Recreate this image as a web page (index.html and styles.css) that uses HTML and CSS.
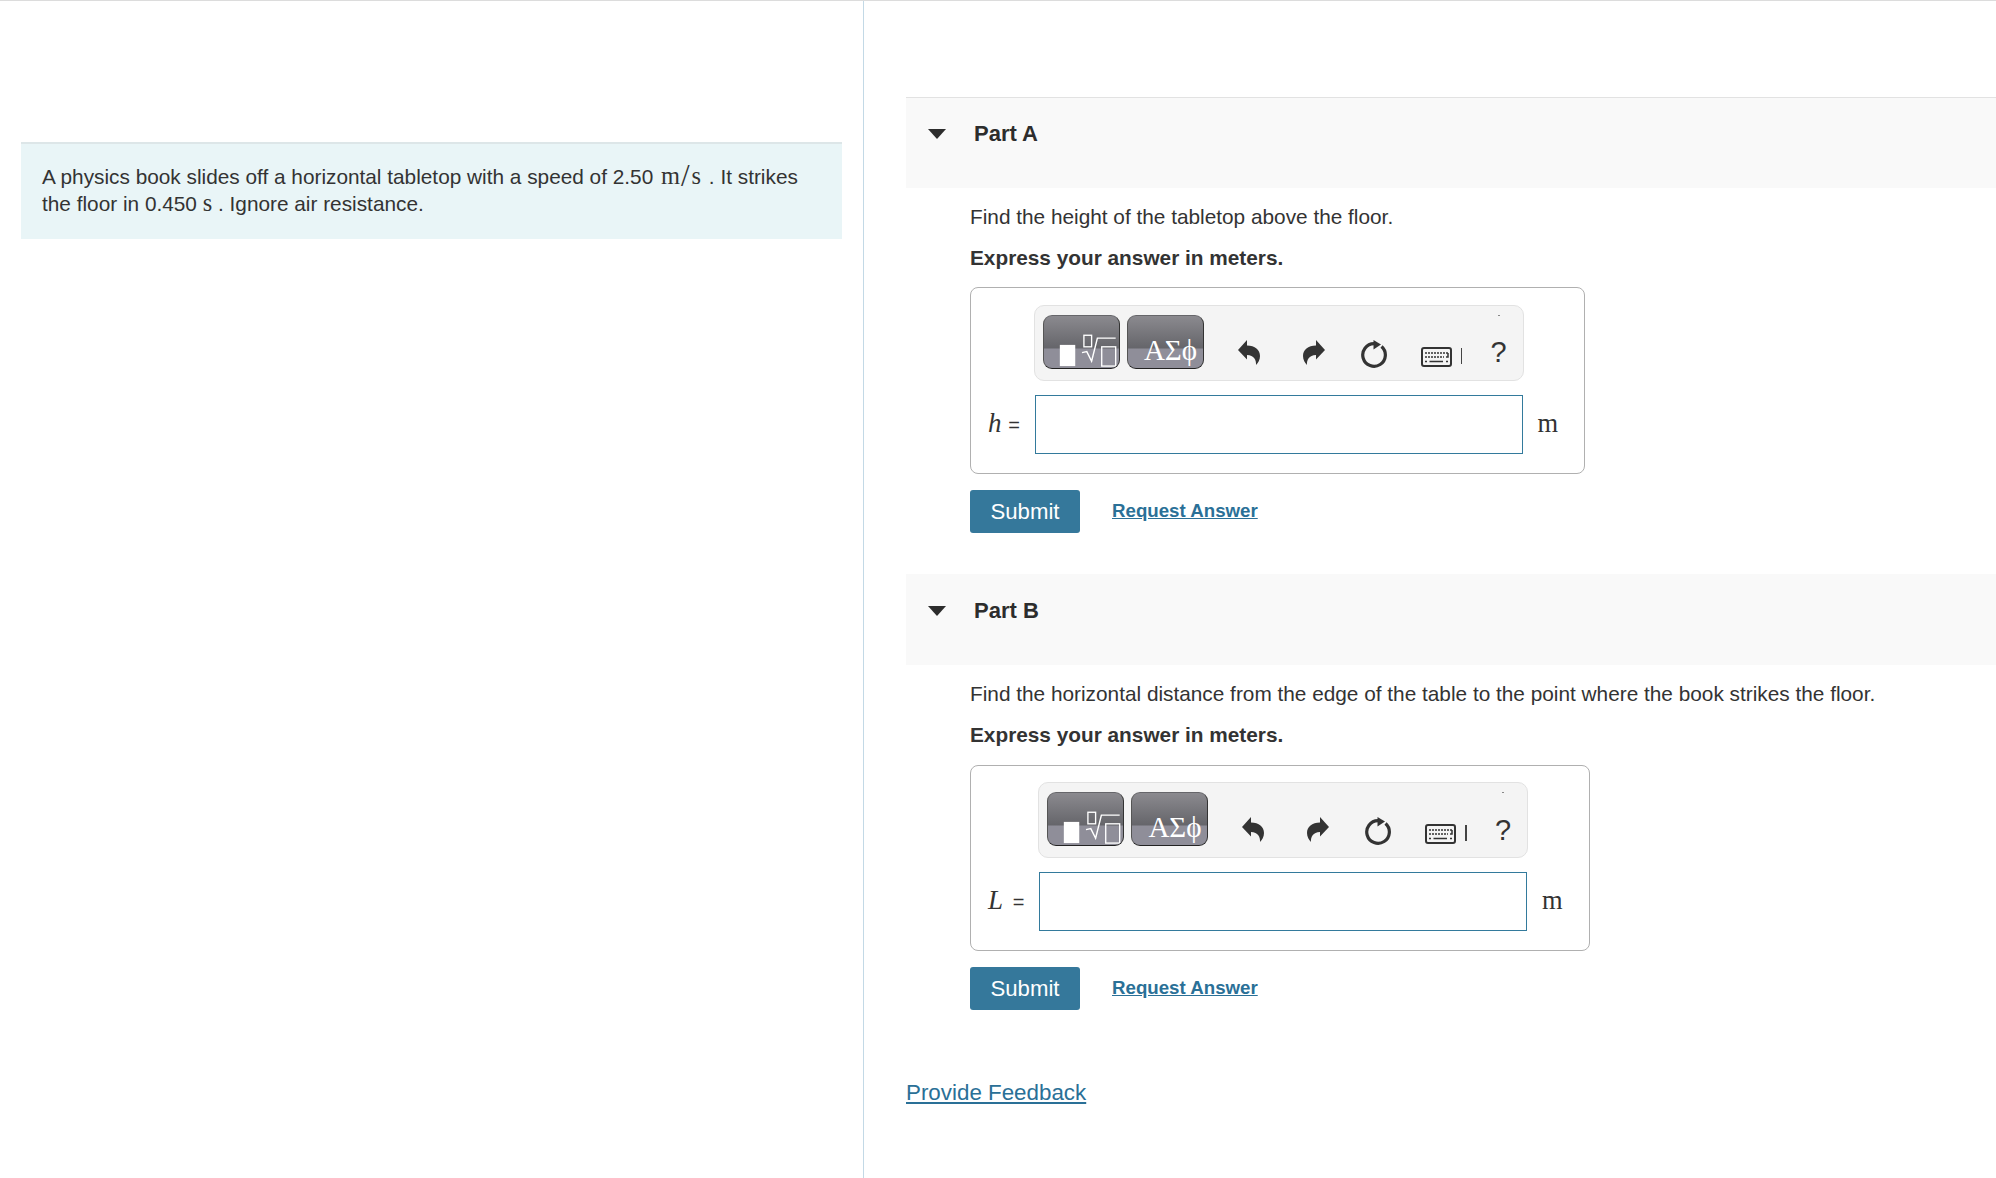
FILE: index.html
```html
<!DOCTYPE html>
<html lang="en">
<head>
<meta charset="utf-8">
<title>Physics problem</title>
<link rel="stylesheet" href="styles.css">
</head>
<body>
<svg class="defs" width="0" height="0" aria-hidden="true">
  <defs>
    <symbol id="i-undo" viewBox="0 0 22 25">
      <path d="M0 10 L9 0 V5.500 C17 5.500 22 10 22 16 C22 20 20 23 18 25 C18.500 20 16 15.500 9 15 V19.500 Z" fill="#333"/>
    </symbol>
    <symbol id="i-redo" viewBox="0 0 22 25">
      <path d="M22 10 L13 0 V5.500 C5 5.500 0 10 0 16 C0 20 2 23 4 25 C3.500 20 6 15.500 13 15 V19.500 Z" fill="#333"/>
    </symbol>
    <symbol id="i-reload" viewBox="0 0 27 28">
      <path d="M13 3.700 A11.300 11.300 0 1 0 20.500 6.500" fill="none" stroke="#333" stroke-width="3.200"/>
      <path d="M12.500 0 L20 4.500 L12.500 9.500 Z" fill="#333"/>
    </symbol>
    <symbol id="i-keys" viewBox="0 0 31 20">
      <rect x="1" y="1" width="29" height="18" rx="2" fill="#f4f4f4" stroke="#333" stroke-width="2"/>
      <path d="M4 6 H27 M4 10 H23" fill="none" stroke="#333" stroke-width="1.500" stroke-dasharray="2 1"/>
      <path d="M25 10 H27 V6 M4 14.500 H6 M8.500 14.500 H22 M25 14.500 H27" fill="none" stroke="#333" stroke-width="1.500"/>
    </symbol>
    <symbol id="i-tmpl" viewBox="0 0 77 54">
      <rect x="16" y="30" width="16" height="22" fill="#fff"/>
      <rect x="41" y="20" width="8" height="12" fill="none" stroke="#fff" stroke-width="1.400"/>
      <path d="M39 38 L44 37 L49 47 L55 23 H74" fill="none" stroke="#fff" stroke-width="1.500"/>
      <rect x="59.500" y="32" width="14.500" height="20" fill="none" stroke="#fff" stroke-width="1.400"/>
    </symbol>
  </defs>
</svg>
<div class="page">
  <aside class="left">
    <div class="intro">A physics book slides off a horizontal tabletop with a speed of 2.50 <span class="math math-spaced">m<span class="slash">/</span>s</span> . It strikes the floor in 0.450 <span class="math">s</span> . Ignore air resistance.</div>
  </aside>
  <main class="right">
    <section class="part">
      <h2 class="part-head"><span class="caret"></span>Part A</h2>
      <div class="part-body">
        <p class="q">Find the height of the tabletop above the floor.</p>
        <p class="q strong">Express your answer in meters.</p>
        <div class="answer">
          <div class="toolbar">
            <span class="tbtn"><svg class="tmpl"><use href="#i-tmpl"/></svg></span>
            <span class="tbtn sym">ΑΣϕ</span>
            <svg class="ic ic-undo"><use href="#i-undo"/></svg>
            <svg class="ic ic-redo"><use href="#i-redo"/></svg>
            <svg class="ic ic-reload"><use href="#i-reload"/></svg>
            <svg class="ic ic-keys"><use href="#i-keys"/></svg>
            <span class="kbar"></span>
            <span class="help">?</span>
          </div>
          <span class="label"><i class="var">h</i> <span class="eq">=</span></span>
          <input class="field" type="text" aria-label="h">
          <span class="unit">m</span>
        </div>
        <div class="actions">
          <button class="submit" type="button">Submit</button>
          <a class="req" href="#">Request Answer</a>
        </div>
      </div>
    </section>
    <section class="part part-b">
      <h2 class="part-head"><span class="caret"></span>Part B</h2>
      <div class="part-body">
        <p class="q">Find the horizontal distance from the edge of the table to the point where the book strikes the floor.</p>
        <p class="q strong">Express your answer in meters.</p>
        <div class="answer">
          <div class="toolbar">
            <span class="tbtn"><svg class="tmpl"><use href="#i-tmpl"/></svg></span>
            <span class="tbtn sym">ΑΣϕ</span>
            <svg class="ic ic-undo"><use href="#i-undo"/></svg>
            <svg class="ic ic-redo"><use href="#i-redo"/></svg>
            <svg class="ic ic-reload"><use href="#i-reload"/></svg>
            <svg class="ic ic-keys"><use href="#i-keys"/></svg>
            <span class="kbar"></span>
            <span class="help">?</span>
          </div>
          <span class="label"><i class="var var-wide">L</i> <span class="eq">=</span></span>
          <input class="field" type="text" aria-label="L">
          <span class="unit">m</span>
        </div>
        <div class="actions">
          <button class="submit" type="button">Submit</button>
          <a class="req" href="#">Request Answer</a>
        </div>
      </div>
    </section>
    <a class="feedback" href="#">Provide Feedback</a>
  </main>
</div>
</body>
</html>
```
FILE: styles.css
```css
* { box-sizing: border-box; }
html, body { margin: 0; height: 100%; overflow: hidden; background: #fff; }
body {
  font-family: "Liberation Sans", Arial, sans-serif;
  font-size: 20.8px;
  line-height: 27px;
  color: #333;
}
.defs { position: absolute; }
.page {
  display: grid;
  grid-template-columns: 864px 1fr;
  height: 100%;
  border-top: 1px solid #dcdcdc;
}
.left {
  border-right: 1px solid #c3d9e6;
  padding: 141px 21px 0;
}
.intro {
  background: #e9f5f7;
  border-top: 2px solid #dde6e8;
  padding: 19px 21px 21px;
  height: 97px;
}
.math { font-family: "Liberation Serif", serif; font-size: 24.4px; line-height: 20px; }
.math-spaced { margin: 0 2px; }
.slash { font-size: 31px; line-height: 20px; vertical-align: -2px; margin: 0 2px 0 1px; }
.right { padding: 96px 0 0 42px; min-width: 0; }
.part-head {
  display: flex;
  align-items: flex-start;
  margin: 0;
  height: 91px;
  padding: 22px 0 0 22px;
  background: #f9f9f9;
  border-top: 1px solid #e2e2e2;
  font-size: 22px;
  line-height: 28px;
  font-weight: 700;
  color: #2d2d2d;
}
.caret {
  width: 0;
  height: 0;
  margin: 9px 28px 0 0;
  border-left: 9px solid transparent;
  border-right: 9px solid transparent;
  border-top: 10px solid #2d2d2d;
}
.part-b { margin-top: 41px; }
.part-b .part-head { border-top-color: #f9f9f9; }
.part-body { padding: 15px 0 0 64px; }
.q { margin: 0 0 13.5px; }
.strong { font-weight: 700; margin-bottom: 16px; }
.part-b .q { margin-bottom: 14.5px; }
.part-b .strong { margin-bottom: 17px; }
.answer {
  display: inline-grid;
  grid-template-columns: auto 490px auto;
  column-gap: 0;
  align-items: center;
  padding: 17px 26px 19px 17px;
  border: 1px solid #b0b0b0;
  border-radius: 8px;
  vertical-align: top;
}
.part-b .answer { padding-top: 16px; }
.toolbar {
  grid-column: 2;
  grid-row: 1;
  position: relative;
  display: flex;
  align-items: flex-start;
  height: 76px;
  padding: 9px 0 0 8px;
  margin-bottom: 14px;
  background: #f4f4f4;
  border: 1px solid #e2e2e2;
  border-radius: 10px;
}
.toolbar::after {
  content: "";
  position: absolute;
  right: 23px;
  top: 9px;
  width: 2px;
  height: 1px;
  background: #888;
}
.tbtn {
  display: flex;
  justify-content: center;
  align-items: flex-end;
  width: 77px;
  height: 54px;
  margin-right: 7px;
  border: 1px solid;
  border-color: #66666a #333 #222 #555;
  border-radius: 9px;
  background: linear-gradient(#8b8a8f 0, #65656a 62%, #8f8e99 63%, #8f8e99 100%);
  overflow: hidden;
}
.tmpl { width: 75px; height: 52px; flex: none; }
.sym {
  color: #fff;
  font-family: "Liberation Serif", serif;
  font-size: 29px;
  line-height: 36px;
  padding-left: 10px;
  white-space: nowrap;
}
.ic { display: block; flex: none; }
.ic-undo { width: 22px; height: 25px; margin: 25px 0 0 27px; }
.ic-redo { width: 22px; height: 25px; margin: 25px 0 0 43px; }
.ic-reload { width: 27px; height: 28px; margin: 25px 0 0 36px; }
.ic-keys { width: 31px; height: 20px; margin: 32px 0 0 33px; }
.kbar { width: 1.500px; height: 16px; margin: 33px 0 0 9px; background: #444; }
.help {
  margin: 21.500px 0 0 28px;
  font-size: 29px;
  line-height: 32px;
  color: #333;
}
.label {
  grid-column: 1;
  grid-row: 2;
  padding-right: 14px;
  font-family: "Liberation Serif", serif;
  font-size: 27px;
  white-space: nowrap;
}
.var-wide { margin-right: 3px; }
.eq { font-size: 20px; font-family: "Liberation Sans", sans-serif; }
.field {
  grid-column: 2;
  grid-row: 2;
  display: block;
  width: 488px;
  height: 59px;
  margin-left: 1px;
  border: 1px solid #337a9c;
  border-radius: 0;
  background: #fff;
  outline: 0;
}
.unit {
  grid-column: 3;
  grid-row: 2;
  padding-left: 13.500px;
  margin-top: -2px;
  font-family: "Liberation Serif", serif;
  font-size: 26.500px;
}
.actions {
  display: flex;
  align-items: center;
  gap: 32px;
  margin-top: 16px;
}
.submit {
  width: 110px;
  height: 43px;
  padding: 0;
  border: 0;
  border-radius: 3px;
  background: #35789b;
  color: #fff;
  font: 22.200px/43px "Liberation Sans", Arial, sans-serif;
}
.req {
  margin-bottom: 2px;
  font-size: 18.700px;
  font-weight: 700;
  color: #2a7097;
}
.feedback {
  display: inline-block;
  margin-top: 67.500px;
  font-size: 22.360px;
  line-height: 30px;
  color: #2a7097;
}
```
